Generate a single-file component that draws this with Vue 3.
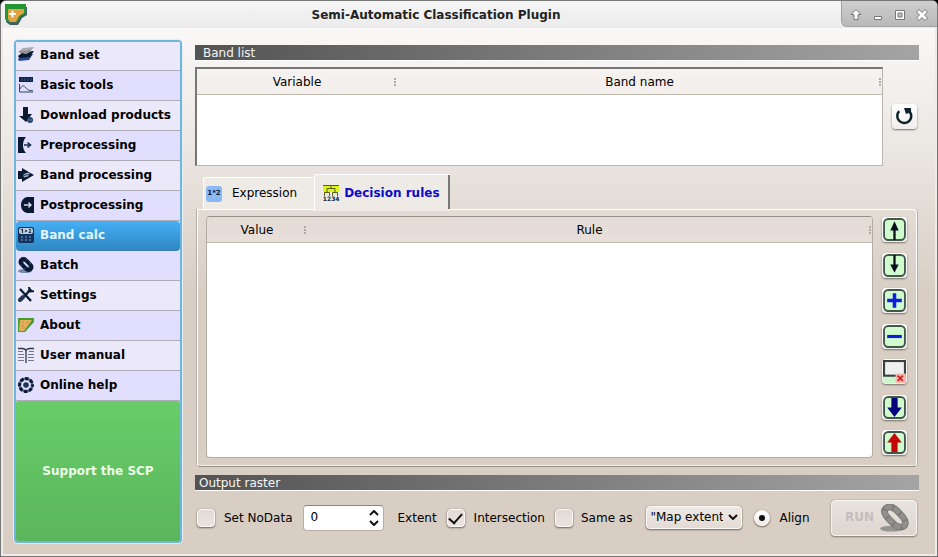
<script setup>
import { ref } from 'vue'

const navy = '#0b1a33'
const items = [
  { label: 'Band set', icon: `<path d="M0 13 5 9l10-1-4 6-10 1z" fill="#2a4a90"/><path d="M0 10 5 6l11-1-4 6-11 1z" fill="${navy}"/><path d="M0 6 5 2l11-1-4 5-4 2z" fill="#a9a9ad"/><path d="M1 6h7l4-1" stroke="#777" fill="none"/>` },
  { label: 'Basic tools', icon: `<path d="M1 0h14v5H1z" fill="#0d2448"/><path d="M4 1v3M7 1v3M10 1v3M13 1v3" stroke="#46618b" stroke-width=".8"/><path d="M1.500 7v8H15M2 12c2-4 4-4 6-1s4 2 7 3" stroke="#35455c" fill="none"/>` },
  { label: 'Download products', icon: `<path d="M5 0h5v7h4l-6 8-7-6h4z" fill="${navy}"/><circle cx="12" cy="13" r="3" fill="#28466e"/><path d="M10 13h4" stroke="#7890b4" stroke-width=".7"/>` },
  { label: 'Preprocessing', icon: `<path d="M0 0h8C4 4 4 12 8 16H0z" fill="${navy}"/><path d="M6 8h6M9.500 5.500 12.500 8l-3 2.500" stroke="#1b2e50" stroke-width="1.600" fill="none"/>` },
  { label: 'Band processing', icon: `<path d="M0 4h4V1l12 7-12 7v-3H0z" fill="${navy}"/><path d="m5 8 3-2 4-.5-2 4-4 1z" fill="#9fb0bd"/><path d="m5 9 3-1 3-.5" stroke="#355174" fill="none"/>` },
  { label: 'Postprocessing', icon: `<path d="M16 0H9C5 1 3 4 3 8s2 7 6 8h7z" fill="${navy}"/><path d="M6 8h7M10.500 5.500 13 8l-2.500 2.500" stroke="#d5ddea" stroke-width="1.400" fill="none"/>` },
  { label: 'Band calc', icon: `<rect width="16" height="16" rx="2" fill="#14325c"/><rect x="1" y="1" width="14" height="6" rx="2" fill="#b9cad9"/><path d="M3 3l1.500-1v4M7 4h2M8 3v2M11 2.500h1.500v1L11 5.500h2" stroke="#172944" fill="none"/><path d="M3 10h2M7 10h2M11 10h2M3 13h2M7 13h2M11 13h2" stroke="#4f82bd" stroke-width="1.500"/>` },
  { label: 'Batch', icon: `<ellipse cx="7" cy="14" rx="7" ry="2" fill="#7489a8"/><g transform="rotate(45 8 7.500)"><rect x="1.500" y="4.500" width="13" height="6" rx="3" fill="#4c6c9b" stroke="${navy}" stroke-width="4"/><path d="M5 7.500h6" stroke="#dfe3f4" stroke-width="1.600"/><path d="M4 3.500h2M9 3.500h2M4 11.500h2M9 11.500h2" stroke="#33507f"/></g>` },
  { label: 'Settings', icon: `<path d="m2 2 11 12M13 2 3 13" stroke="${navy}" stroke-width="2.400"/><path d="m2 13 3-3" stroke="#263650" stroke-width="4" stroke-linecap="round"/><path d="M11 0c0 3 2 5 5 4M10 3l3 2" stroke="${navy}" stroke-width="2" fill="none"/>` },
  { label: 'About', icon: `<path d="M0 1h16v4L7 15H0z" fill="#43a02c"/><path d="M2 3h12L6 14H1z" fill="#e5ae5b"/><path d="M4 5h2M8 6h2M3 9h3M5 11h2" stroke="#c98f48"/>` },
  { label: 'User manual', icon: `<path d="M0 1.500h4q4 0 4 3 0-3 4-3h4M8 4v12" stroke="#303a46" stroke-width="1.300" fill="none"/><path d="M0 4.500h5M0 7.500h6M0 10.500h6M0 13.500h6M11 4.500h5M10 7.500h6M10 10.500h6M10 13.500h6" stroke="#73798a" stroke-width="1.200"/>` },
  { label: 'Online help', icon: `<circle cx="8" cy="8" r="6.400" fill="none" stroke="#5b6a84" stroke-width="2.400"/><circle cx="8" cy="8" r="6.400" fill="none" stroke="${navy}" stroke-width="3.200" stroke-dasharray="3.400 1.627" stroke-dashoffset="1.700"/><circle cx="8" cy="8" r="2.800" fill="#1d3557"/>` },
]
const selected = ref('Band calc')

const ruleTools = [
  { label: 'Move rule up', icon: `<path d="M11 21V9" stroke="#081020" stroke-width="2.200"/><path d="M11 3 7 12h8z" fill="#081020"/>` },
  { label: 'Move rule down', icon: `<path d="M11 1v12" stroke="#081020" stroke-width="2.200"/><path d="m11 18-4-8h8z" fill="#081020"/>` },
  { label: 'Add rule', icon: `<path d="M11 4v14M4 11h14" stroke="#0c1de0" stroke-width="3.400"/>` },
  { label: 'Remove rule', icon: `<path d="M4 11h14" stroke="#0c1de0" stroke-width="3"/>` },
  { label: 'Clear rules', clear: true, icon: `<rect y="0" width="22" height="22" fill="#cdf5cb"/><rect x="1" y="1" width="20" height="14" fill="#efefef" stroke="#384040" stroke-width="2"/><rect x="12" y="13" width="10" height="9" rx="1" fill="#f7b8ac"/><path d="m14 15 5 5M19 15l-5 5" stroke="#d42020" stroke-width="1.800"/>` },
  { label: 'Export rules', icon: `<path d="M8 2h6v9h4l-7 9-7-9h4z" fill="#04047c"/>` },
  { label: 'Import rules', icon: `<path d="M8 20h6v-9h4L11 2l-7 9h4z" fill="#c40808"/>` },
]
const activeTab = ref('rules')
const setNoData = ref(false)
const noData = ref(0)
const intersection = ref(true)
const sameAs = ref(false)
const align = ref('align')
</script>

<template>
  <div class="window">
    <header class="titlebar">
      <svg class="app-icon" viewBox="0 0 22 22" aria-hidden="true">
        <path d="M2 3h20v8l-5 3-4 7H5l-4-3z" fill="#41615c" />
        <path d="M0 0h21v9l-5 3-4 6H3l-3-3z" fill="#239632" />
        <path d="M3 5h16v4l-5 3-3 6H5l-2-3z" fill="#e2a343" />
        <path d="M4 10h7M7.500 6.500v7" stroke="#fff" stroke-width="1.800" />
      </svg>
      <h1>Semi-Automatic Classification Plugin</h1>
      <div class="controls">
        <button aria-label="Shade"><svg viewBox="0 0 12 12"><path d="m6 .5 5 5H8v5H4v-5H1z" /></svg></button>
        <button aria-label="Minimize"><svg viewBox="0 0 12 12"><path d="M2.500 7.500h7v3h-7z" /></svg></button>
        <button aria-label="Maximize"><svg viewBox="0 0 12 12"><path fill-rule="evenodd" d="M1.500 1.500h9v9h-9zM4 4v4h4v-4z" /></svg></button>
        <button aria-label="Close"><svg viewBox="0 0 12 12"><path d="m3 .5 3 3 3-3L11.500 3l-3 3 3 3L9 11.500l-3-3-3 3L.5 9l3-3-3-3z" /></svg></button>
      </div>
    </header>

    <div class="content">
      <aside class="sidebar">
        <nav>
          <button
            v-for="item in items"
            :key="item.label"
            class="nav-item"
            :class="{ current: selected === item.label }"
            @click="selected = item.label"
          >
            <svg viewBox="0 0 16 16" aria-hidden="true" v-html="item.icon"></svg>
            <span>{{ item.label }}</span>
          </button>
        </nav>
        <button class="support">Support the SCP</button>
      </aside>

      <main>
        <h2 class="section">Band list</h2>
        <div class="band-row">
          <div class="grid band-grid">
            <table>
              <colgroup><col class="col-variable" /><col /></colgroup>
              <thead><tr><th>Variable</th><th>Band name</th></tr></thead>
              <tbody></tbody>
            </table>
          </div>
          <button class="tool refresh" aria-label="Refresh list">
            <svg viewBox="0 0 23 23"><path d="M6.200 6.200A7 7 0 1 0 17 7" fill="none" stroke="#10222c" stroke-width="2.500" /><path d="M11 3h7v7l-2-2-3 1z" fill="#10222c" /></svg>
          </button>
        </div>

        <div class="tabs" role="tablist">
          <button class="tab" :class="{ active: activeTab === 'expression' }" role="tab" @click="activeTab = 'expression'">
            <span class="expr-icon" aria-hidden="true">1*2</span>
            <span>Expression</span>
          </button>
          <button class="tab" :class="{ active: activeTab === 'rules' }" role="tab" @click="activeTab = 'rules'">
            <span class="rules-icon" aria-hidden="true">
              <svg viewBox="0 0 16 11"><path d="M0 0h16v7H0z" fill="#dcf51b" /><path d="M1 7h6v4H1zM9 7h6v4H9z" fill="#eeeae5" /><path d="M0 .5h16M8 0v3M4 7V3.500h8V7M1.500 11V7.500h5V11M9.500 11V7.500h5V11" fill="none" stroke="#596116" /></svg>
              <span>1234</span>
            </span>
            <span>Decision rules</span>
          </button>
        </div>

        <section class="pane">
          <div class="grid rule-grid">
            <table>
              <colgroup><col class="col-value" /><col /></colgroup>
              <thead><tr><th>Value</th><th>Rule</th></tr></thead>
              <tbody></tbody>
            </table>
          </div>
          <div class="rule-tools">
            <button v-for="tool in ruleTools" :key="tool.label" class="tool rule-tool" :aria-label="tool.label">
              <svg viewBox="0 0 22 22" aria-hidden="true"><rect v-if="!tool.clear" x="1" y="1" width="20" height="20" rx="4" fill="#cffbcd" stroke="#45564d" stroke-width="1.800" /><g v-html="tool.icon"></g></svg>
            </button>
          </div>
        </section>

        <h2 class="section output">Output raster</h2>
        <form class="options" @submit.prevent>
          <label class="check"><input v-model="setNoData" type="checkbox" />Set NoData</label>
          <div class="spin">
            <input v-model.number="noData" type="number" aria-label="NoData value" />
            <div class="steps">
              <button type="button" aria-label="Increase" @click="noData++"><svg viewBox="0 0 10 6"><path d="m1 5 4-4 4 4" /></svg></button>
              <button type="button" aria-label="Decrease" @click="noData--"><svg viewBox="0 0 10 6"><path d="m1 1 4 4 4-4" /></svg></button>
            </div>
          </div>
          <span class="extent">Extent</span>
          <label class="check"><input v-model="intersection" type="checkbox" />Intersection</label>
          <label class="check same"><input v-model="sameAs" type="checkbox" />Same as</label>
          <div class="combo">
            <select aria-label="Same as extent"><option>"Map extent"</option></select>
            <svg viewBox="0 0 10 6" aria-hidden="true"><path d="m1 1 4 4 4-4" /></svg>
          </div>
          <label class="check align"><input v-model="align" type="radio" value="align" />Align</label>
          <button class="run" type="button" disabled>
            <span>RUN</span>
            <svg viewBox="0 0 30 28" aria-hidden="true">
              <ellipse cx="12" cy="25" rx="12" ry="3" fill="#98948f" />
              <g fill="none">
                <path d="M6 4c4-3 9-1 14 5 6 6 8 10 5 13s-9 1-14-5C5 11 3 7 6 4z" stroke="#7d7b79" stroke-width="7" />
                <path d="M6 4c4-3 9-1 14 5 6 6 8 10 5 13s-9 1-14-5C5 11 3 7 6 4z" stroke="#918f8c" stroke-width="5" stroke-dasharray="7 2" />
              </g>
            </svg>
          </button>
        </form>
      </main>
    </div>
  </div>
</template>

<style>
body { margin: 0; background: #000; }
</style>

<style scoped>
* { box-sizing: border-box; }
button, input, select { font: inherit; color: inherit; margin: 0; }
button { padding: 0; border: 0; background: none; }
svg { display: block; flex: none; }

.window {
  min-height: 100vh;
  display: flex;
  flex-direction: column;
  font: 12px/15px "DejaVu Sans", sans-serif;
  color: #000;
  background: linear-gradient(#f9f8f7 28px, #ece8e4 140px, #d8cec4 290px);
  border: 1px solid #777;
  border-radius: 6px 6px 0 0;
  box-shadow: inset 2px 0 #eeeae6, inset -2px 0 #eeeae6, inset 0 -2px #eeeae6;
}
.titlebar {
  height: 27px;
  display: flex;
  align-items: center;
  padding-left: 4px;
  background: linear-gradient(#f5f5f5, #ebebeb);
  border-radius: 5px 5px 0 0;
}
.app-icon { width: 22px; height: 22px; margin-right: 4px; }
h1 { flex: 1; margin: 0; padding-top: 2px; font-size: 12px; line-height: 15px; text-align: center; color: #222; }
.controls {
  align-self: flex-start;
  height: 26px;
  width: 96px;
  display: flex;
  align-items: center;
  justify-content: space-between;
  padding: 2px 9px 0 8px;
  background: linear-gradient(#cfcfcf, #b8b8b8);
  border: 1px solid #a2a2a2;
  border-width: 0 0 1px 1px;
  border-radius: 0 5px 0 6px;
}
.controls svg { width: 12px; height: 12px; }
.controls path { fill: #fff; stroke: #777; }

.content { flex: 1; display: flex; gap: 13px; padding: 12px 18px 13px 13px; }
.sidebar {
  width: 168px;
  flex: none;
  display: flex;
  flex-direction: column;
  border: 2px solid #6fb5dc;
  border-radius: 4px;
  box-shadow: 0 0 0 1px #e4eef3;
  background: #e3e0ff;
  font-weight: bold;
}
.nav-item {
  width: 100%;
  height: 30px;
  display: flex;
  align-items: center;
  gap: 6px;
  padding-left: 2px;
  border-bottom: 1px solid #aeacb8;
  background: #e2dffe;
  white-space: nowrap;
}
.nav-item:nth-child(odd) { background: #ebe8fa; }
.nav-item:first-child { height: 29px; padding-bottom: 2px; }
.nav-item svg { width: 16px; height: 16px; margin-bottom: 2px; }
.nav-item.current {
  color: #e4f5ff;
  background: linear-gradient(#46aff5, #2f88c4);
  border-radius: 4px;
  border-bottom-color: #3d80b0;
}
.support {
  flex: 1;
  font-weight: bold;
  color: #eefbe9;
  background: linear-gradient(#68cd68, #5ab65c);
  border-radius: 2px;
}

main { flex: 1; min-width: 0; display: flex; flex-direction: column; padding-top: 5px; }
.section {
  height: 16px;
  margin: 0;
  padding: 1px 0 0 8px;
  font-size: 12px;
  line-height: 15px;
  font-weight: normal;
  color: #f6f6f6;
  background: linear-gradient(90deg, #535353, #a4a4a4);
  border-bottom: 1px solid #fff;
}
.section.output { margin-top: 8px; padding-left: 4px; }
.band-row { display: flex; align-items: center; gap: 9px; padding: 6px 2px 0 0; }
.grid { flex: 1; min-width: 0; background: #fff; }
.band-grid { height: 99px; border: 1px solid #b9b5b0; border-top: 2px solid #777; border-left: 2px solid #777; }
.rule-grid { border: 1px solid #b5aca4; border-radius: 4px; border-top-color: #968e88; overflow: hidden; }
table { width: 100%; table-layout: fixed; border-collapse: separate; border-spacing: 0; }
.col-variable { width: 200px; }
.col-value { width: 100px; }
th {
  position: relative;
  height: 26px;
  padding: 1px 0 0;
  font-weight: normal;
  background: linear-gradient(#f5f2f0, #f1eeeb);
  border-bottom: 1px solid #c1b8ae;
}
.rule-grid th { background: linear-gradient(#e3dbd5, #e9dfda); }
th::after {
  content: "";
  position: absolute;
  right: 1px;
  top: 9px;
  width: 2px;
  height: 8px;
  background: repeating-linear-gradient(#b0aaa6 0 2px, transparent 2px 3px);
}
.tool {
  flex: none;
  width: 25px;
  height: 25px;
  display: grid;
  place-items: center;
  background: linear-gradient(#fff, #f0eeec);
  border-radius: 4px;
  box-shadow: 0 1px 2px #77706a;
}
.refresh svg { width: 23px; height: 23px; }

.tabs { display: flex; align-items: flex-end; height: 35px; margin: 8px 0 0 8px; }
.tab {
  height: 32px;
  display: flex;
  align-items: center;
  gap: 10px;
  padding: 0 17px 0 2px;
  background: #eeebe7;
  border: 1px solid #fff;
  border-width: 1px 0 0 1px;
  border-radius: 2px 0 0;
}
.tab.active {
  position: relative;
  height: 37px;
  margin-bottom: -2px;
  gap: 5px;
  padding: 0 10px 0 8px;
  font-weight: bold;
  color: #0a0ac8;
}
.tab.active::after {
  content: "";
  position: absolute;
  right: 0;
  top: 0;
  bottom: 2px;
  width: 2px;
  background: #777;
}
.expr-icon {
  width: 16px;
  height: 16px;
  border-radius: 3px;
  background: #8ab9f5;
  font-size: 7px;
  line-height: 15px;
  font-weight: bold;
  display: flex;
  justify-content: center;
  color: #10203a;
}
.rules-icon { width: 16px; font-size: 6px; line-height: 6px; color: #222; display: flex; flex-direction: column; align-items: center; }
.rules-icon svg { width: 16px; height: 11px; }

.pane {
  flex: 1;
  display: flex;
  gap: 9px;
  margin: 0 2px;
  padding: 6px 9px 8px 8px;
  border: 1px solid #fff;
  border-bottom-color: #938c85;
  border-radius: 0 4px 4px 4px;
  box-shadow: -1px 0 #b5ada6, inset 0 -1px #f4f1ee, 1px 0 #b5ada6;
}
.rule-tools { display: flex; flex-direction: column; justify-content: space-between; padding: 1px 0 3px; }
.rule-tool svg { width: 23px; height: 23px; }

.options { display: flex; align-items: center; gap: 10px; height: 52px; padding: 1px 2px 0; white-space: nowrap; }
.check { display: flex; align-items: center; gap: 9px; padding-top: 1px; }
.check input {
  appearance: none;
  width: 18px;
  height: 18px;
  display: grid;
  place-items: center;
  border: 1px solid #fbf8f5;
  border-radius: 4px;
  background: linear-gradient(#e2dad5, #eae4df);
  box-shadow: 0 1px 2px #6e665f, 0 0 1px #8d857e;
}
.check input[type="checkbox"]:checked::before {
  content: "";
  width: 11px;
  height: 6px;
  margin-bottom: 3px;
  border: solid #111;
  border-width: 0 0 2px 2px;
  transform: rotate(-48deg);
}
.check input[type="radio"] { width: 16px; height: 16px; border-radius: 50%; background: linear-gradient(#fff, #eee8e4); }
.check input[type="radio"]:checked::before { content: ""; width: 6px; height: 6px; border-radius: 50%; background: #111; }
.spin {
  display: flex;
  align-items: center;
  width: 81px;
  height: 26px;
  padding: 0 4px 0 7px;
  background: #fff;
  border: 1px solid #b5ada6;
  border-top-color: #8b847e;
  border-radius: 4px;
}
.spin input { flex: 1; min-width: 0; padding: 0; border: 0; outline: 0; background: none; appearance: textfield; }
.spin input::-webkit-inner-spin-button { appearance: none; }
.steps { display: grid; gap: 4px; }
.steps svg, .combo svg { width: 10px; height: 6px; fill: none; stroke: #111; stroke-width: 2; }
.extent { margin-left: 4px; padding-top: 1px; }
.check.same { gap: 8px; }
.combo { position: relative; width: 96px; margin-left: 4px; }
.combo select {
  appearance: none;
  width: 100%;
  height: 23px;
  padding: 0 18px 1px 3px;
  border: 1px solid #fbf8f5;
  border-radius: 4px;
  background: linear-gradient(#eee9e5, #e3dbd5);
  box-shadow: 0 1px 2px #6e665f, 0 0 1px #8d857e;
  text-overflow: clip;
}
.combo svg { position: absolute; right: 4px; top: 8px; pointer-events: none; }
.align { margin-left: 2px; }
.run {
  width: 86px;
  height: 36px;
  margin-left: auto;
  display: flex;
  align-items: center;
  justify-content: space-between;
  padding: 0 7px 0 13px;
  font-weight: bold;
  color: #c3bebb;
  background: linear-gradient(#e9e4e0, #ddd5ce);
  border: 1px solid #f7f3f0;
  border-radius: 4px;
  box-shadow: 0 1px 2px #7e766f, 0 0 1px #8d857e;
}
.run svg { width: 29px; height: 28px; }
</style>
